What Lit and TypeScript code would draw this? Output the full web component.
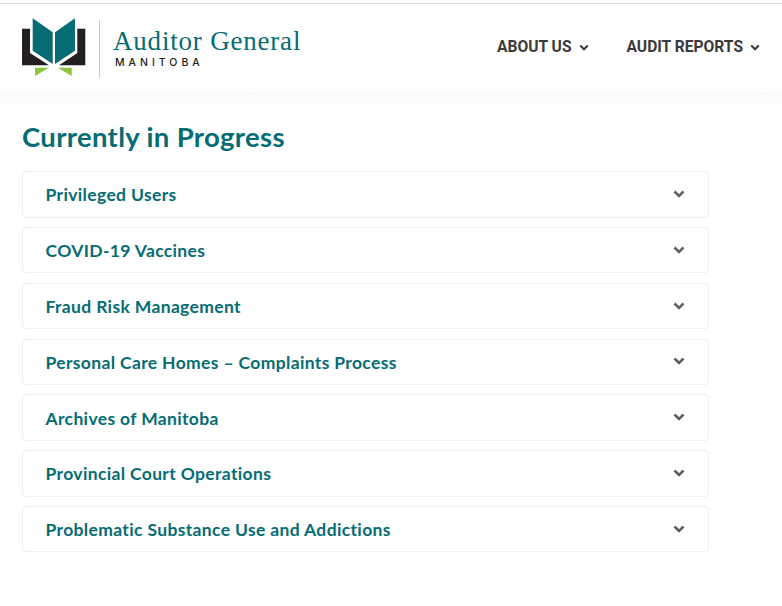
import { LitElement, html, css } from "lit";
import { customElement } from "lit/decorators.js";

const ITEMS = [
  "Privileged Users",
  "COVID-19 Vaccines",
  "Fraud Risk Management",
  "Personal Care Homes – Complaints Process",
  "Archives of Manitoba",
  "Provincial Court Operations",
  "Problematic Substance Use and Addictions",
];

const chevron = (cls: string) => html`<svg class=${cls} viewBox="0 0 12 8" aria-hidden="true"><path d="M1.5 1.5 6 6l4.5-4.5" fill="none" stroke="currentColor" stroke-width="2.5"/></svg>`;

@customElement("app-root")
export class AppRoot extends LitElement {
  static styles = css`
    :host { display: block; min-height: 606px; background: #fff; font-family: "Lato", "Open Sans", sans-serif; }
    .top { height: 3px; background: #fff; border-bottom: 1px solid #dedede; }
    header { height: 88px; display: flex; align-items: center; padding: 0 22px; box-sizing: border-box; background: #fff; }
    .logo { display: flex; align-items: center; }
    .mark { width: 64px; height: 59px; display: block; margin-top: -1px; }
    .rule { width: 1px; height: 58px; background: #ccc; margin: 2px 13px 0; }
    .words { display: flex; flex-direction: column; margin-top: -2px; }
    .name { font-family: "Liberation Serif", serif; font-size: 27px; line-height: 30px; color: #066c74; letter-spacing: .8px; white-space: nowrap; }
    .sub { font-family: "Inter", sans-serif; font-size: 10.5px; line-height: 12px; font-weight: 500; letter-spacing: 4px; color: #222; margin: 1px 0 0 2px; }
    nav { margin-left: auto; display: flex; gap: 38px; margin-top: -2px; }
    .nav-item { display: flex; align-items: center; gap: 7px; font-family: "Roboto", sans-serif; font-weight: 700; font-size: 15.6px; color: #3a3a3a; white-space: nowrap; }
    .nav-chev { width: 10px; height: 7px; }
    .band { height: 18px; background: linear-gradient(#fafafa, #fff); }
    main { padding: 0 22px; }
    h1 { margin: 10px 0 17.3px; font-size: 27.5px; line-height: 34px; font-weight: 700; letter-spacing: .33px; color: #066c74; }
    .list { width: 687px; display: flex; flex-direction: column; gap: 9.5px; }
    .row { height: 46.3px; box-sizing: border-box; border: 1px solid #efefef; border-radius: 4px; display: flex; align-items: center; justify-content: space-between; padding: 1px 23px 0 22.5px; font-size: 17.5px; font-weight: 700; letter-spacing: .35px; color: #066c74; }
    .row-chev { width: 12px; height: 8px; color: #5f5f5f; margin-top: -2px; }
  `;

  render() {
    return html`
      <div class="top"></div>
      <header>
        <div class="logo">
          <svg class="mark" viewBox="22 18 64 59" aria-hidden="true">
            <path fill="#231f20" d="M22 28.7h8V53l19 12.3H22zM77.3 28.7h8v36.6H59L77.3 53z"/>
            <path fill="#066c74" d="M32.7 18.3l20 14V64l-20-13.3zM55 32.3l20-14v32.4L55 64z"/>
            <path fill="#8cc63f" d="M35 67.7h14L35 76zM57.7 67.7h14V76z"/>
          </svg>
          <div class="rule"></div>
          <div class="words">
            <div class="name">Auditor General</div>
            <div class="sub">MANITOBA</div>
          </div>
        </div>
        <nav>
          <div class="nav-item">ABOUT US ${chevron("nav-chev")}</div>
          <div class="nav-item">AUDIT REPORTS ${chevron("nav-chev")}</div>
        </nav>
      </header>
      <div class="band"></div>
      <main>
        <h1>Currently in Progress</h1>
        <div class="list">
          ${ITEMS.map((t) => html`<div class="row"><span>${t}</span>${chevron("row-chev")}</div>`)}
        </div>
      </main>
    `;
  }
}
